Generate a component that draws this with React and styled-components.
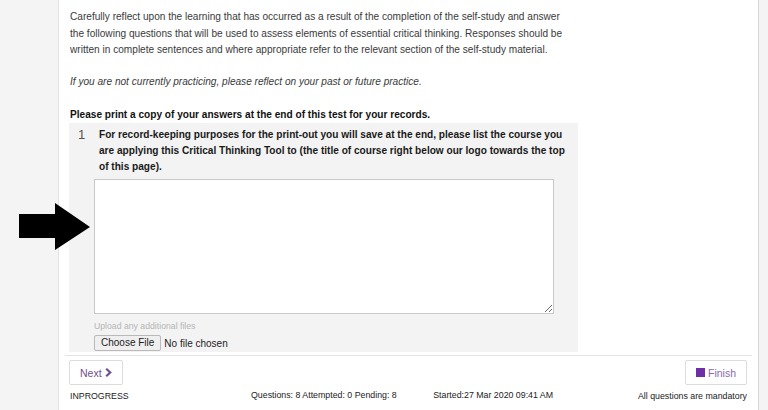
import React from "react";
import styled, { createGlobalStyle } from "styled-components";

const Global = createGlobalStyle`
  html, body { margin: 0; padding: 0; }
  body {
    background: #f4f4f4;
    font-family: "Liberation Sans", Arial, sans-serif;
    color: #333;
  }
`;

const Page = styled.div`
  position: relative;
  display: flex;
  height: 410px;
  overflow: hidden;
`;

const Gutter = styled.div`
  width: 58px;
  flex: none;
`;

const Panel = styled.main`
  box-sizing: border-box;
  width: 701px;
  flex: none;
  background: #fff;
  border-left: 1px solid #e4e4e4;
  border-right: 1px solid #d6d6d6;
  padding: 9px 11px 0 11px;
`;

const Para = styled.p`
  margin: ${(p) => p.$mt || 0}px 0 0 0;
  font-size: 10.1px;
  line-height: ${(p) => p.$lh || 16}px;
  white-space: nowrap;
  color: ${(p) => (p.$bold ? "#111" : "#3a3a3a")};
  font-style: ${(p) => (p.$italic ? "italic" : "normal")};
  font-weight: ${(p) => (p.$bold ? 700 : 400)};
`;

const QuestionBlock = styled.section`
  box-sizing: border-box;
  width: 509px;
  margin-left: -1px;
  background: #f3f3f3;
  display: flex;
  padding: 4px 0 1px 0;
`;

const Num = styled.div`
  width: 25px;
  flex: none;
  box-sizing: border-box;
  padding-left: 9px;
  font-size: 13px;
  line-height: 16px;
  color: #555;
`;

const QBody = styled.div`
  flex: 1;
  display: flex;
  flex-direction: column;
  align-items: flex-start;
`;

const QText = styled.div`
  padding-left: 5px;
  font-size: 10.1px;
  font-weight: 700;
  line-height: 16px;
  color: #1a1a1a;
  white-space: nowrap;
`;

const Answer = styled.textarea`
  box-sizing: border-box;
  margin-top: 4px;
  width: 460px;
  height: 135px;
  border: 1px solid #c9c9c9;
  background: #fff;
  padding: 4px;
  font-family: inherit;
  font-size: 10px;
  outline: none;
`;

const UploadLabel = styled.div`
  margin-top: 6px;
  font-size: 8.7px;
  line-height: 12px;
  color: #b5b5b5;
`;

const FileRow = styled.div`
  margin-top: 3px;
  display: flex;
  align-items: center;
  font-size: 10px;
  color: #222;
`;

const FileButton = styled.button`
  box-sizing: border-box;
  height: 16px;
  padding: 0 6px;
  border: 1px solid #b9b9b9;
  border-radius: 2px;
  background: #efefef;
  font-family: inherit;
  font-size: 10px;
  color: #222;
  line-height: 14px;
`;

const NoFile = styled.span`
  margin-left: 3px;
`;

const Separator = styled.hr`
  margin: 3px -5px 0 -5px;
  border: 0;
  border-top: 1px solid #e3e3e3;
  height: 0;
`;

const Footer = styled.footer`
  display: grid;
  grid-template-columns: repeat(4, 1fr);
  margin-top: 4px;
  row-gap: 4px;
`;

const NavButton = styled.button`
  box-sizing: border-box;
  height: 25px;
  padding: 0 10px;
  border: 1px solid #dcdcdc;
  border-radius: 2px;
  background: #fff;
  font-family: inherit;
  font-size: 10.5px;
  color: ${(p) => (p.$finish ? "#8a6aad" : "#6f4f91")};
  display: inline-flex;
  align-items: center;
  gap: 3px;
  justify-self: ${(p) => (p.$end ? "end" : "start")};
  grid-column: ${(p) => (p.$end ? 4 : 1)};
  margin-left: ${(p) => (p.$end ? 0 : -1)}px;
`;

const Square = styled.span`
  width: 9px;
  height: 9px;
  background: #6f2da8;
  display: inline-block;
`;

const Status = styled.div`
  font-size: 8.8px;
  line-height: 12px;
  color: #222;
  white-space: nowrap;
  text-align: ${(p) => p.$align || "left"};
  margin-top: ${(p) => p.$mt || 0}px;
`;

const Arrow = styled.svg`
  position: absolute;
  left: 19px;
  top: 203px;
`;

export default function App() {
  return (
    <>
      <Global />
      <Page>
        <Gutter />
        <Panel>
          <Para $lh={16.5}>
            Carefully reflect upon the learning that has occurred as a result of the completion of the self-study and answer
            <br />
            the following questions that will be used to assess elements of essential critical thinking. Responses should be
            <br />
            written in complete sentences and where appropriate refer to the relevant section of the self-study material.
          </Para>
          <Para $italic $mt={15.5}>
            If you are not currently practicing, please reflect on your past or future practice.
          </Para>
          <Para $bold $mt={17}>
            Please print a copy of your answers at the end of this test for your records.
          </Para>
          <QuestionBlock>
            <Num>1</Num>
            <QBody>
              <QText>
                For record-keeping purposes for the print-out you will save at the end, please list the course you
                <br />
                are applying this Critical Thinking Tool to (the title of course right below our logo towards the top
                <br />
                of this page).
              </QText>
              <Answer />
              <UploadLabel>Upload any additional files</UploadLabel>
              <FileRow>
                <FileButton type="button">Choose File</FileButton>
                <NoFile>No file chosen</NoFile>
              </FileRow>
            </QBody>
          </QuestionBlock>
          <Separator />
          <Footer>
            <NavButton type="button">
              Next
              <svg width="7" height="9" viewBox="0 0 7 9">
                <path d="M1.2 0.8 L5.2 4.5 L1.2 8.2" fill="none" stroke="#6f4f91" strokeWidth="2.2" />
              </svg>
            </NavButton>
            <NavButton type="button" $end $finish>
              <Square />
              Finish
            </NavButton>
            <Status $mt={1}>INPROGRESS</Status>
            <Status $align="center">Questions: 8 Attempted: 0 Pending: 8</Status>
            <Status $align="center">Started:27 Mar 2020 09:41 AM</Status>
            <Status $align="right" $mt={1}>All questions are mandatory</Status>
          </Footer>
        </Panel>
        <Arrow width="71" height="47" viewBox="0 0 71 47">
          <polygon points="0,11 36,11 36,0 71,24 36,47 36,35 0,35" fill="#000" />
        </Arrow>
      </Page>
    </>
  );
}
